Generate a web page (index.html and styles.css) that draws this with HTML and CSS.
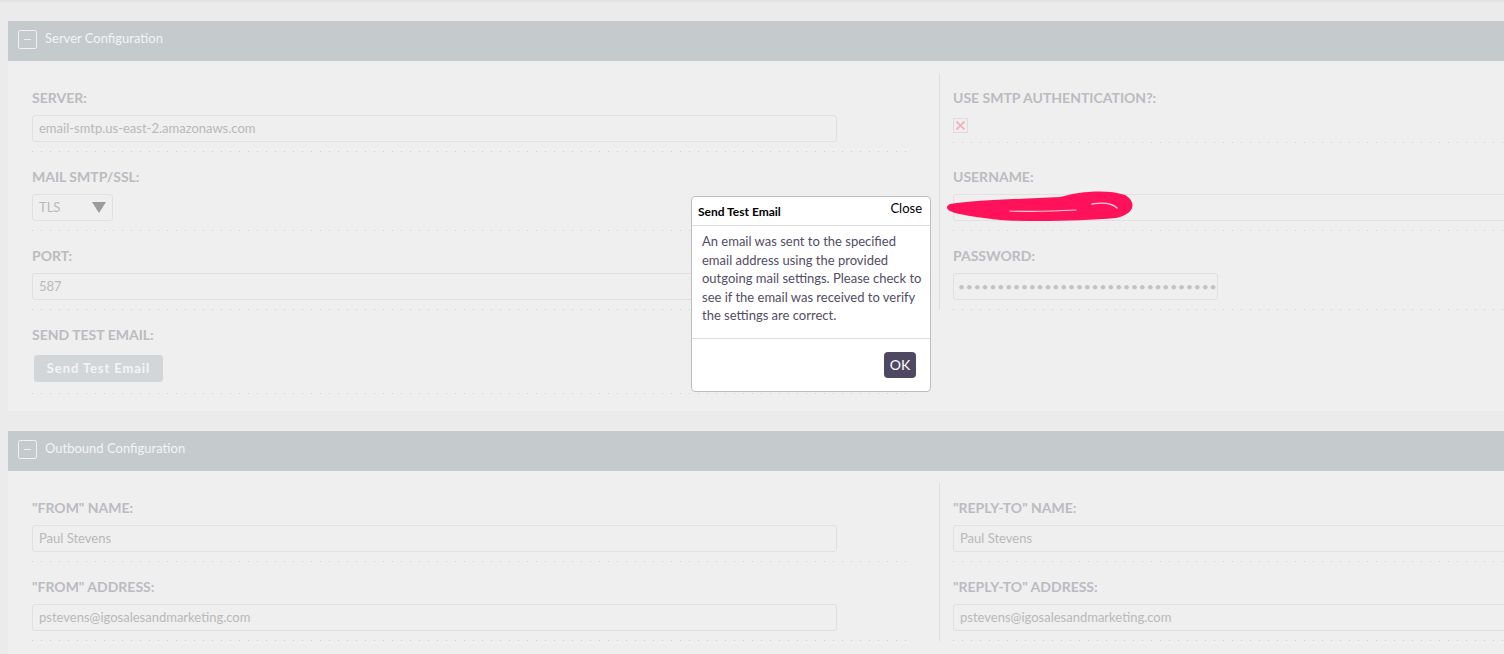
FILE: index.html
```html
<!DOCTYPE html>
<html lang="en">
<head>
<meta charset="utf-8">
<title>Email Settings</title>
<link rel="stylesheet" href="styles.css">
</head>
<body>
<div class="topline"></div>
<div class="page">
  <section class="panel">
    <div class="panel-header">
      <span class="toggle"><span class="minus"></span></span>
      <span class="panel-title">Server Configuration</span>
    </div>
    <div class="panel-body">
      <div class="cell left">
        <div class="label">SERVER:</div>
        <div class="field"><div class="input wide">email-smtp.us-east-2.amazonaws.com</div></div>
      </div>
      <div class="cell right">
        <div class="label">USE SMTP AUTHENTICATION?:</div>
        <div class="field check-field">
          <span class="checkbox"><svg viewBox="0 0 13 13" width="13" height="13"><path d="M2.5 2.5 L10.5 10.5 M10.5 2.5 L2.5 10.5" stroke="#f2b5be" stroke-width="1.8" fill="none"/></svg></span>
        </div>
      </div>
      <div class="cell left">
        <div class="label">MAIL SMTP/SSL:</div>
        <div class="field">
          <div class="input select"><span>TLS</span><svg class="caret" viewBox="0 0 14 11" width="14" height="11"><polygon points="0,0 14,0 7,11" fill="#9b9b9b"/></svg></div>
        </div>
      </div>
      <div class="cell right">
        <div class="label">USERNAME:</div>
        <div class="field"><div class="input wide">&nbsp;</div></div>
      </div>
      <div class="cell left">
        <div class="label">PORT:</div>
        <div class="field"><div class="input wide">587</div></div>
      </div>
      <div class="cell right">
        <div class="label">PASSWORD:</div>
        <div class="field"><div class="input password">•••••••••••••••••••••••••••••••••</div></div>
      </div>
      <div class="cell left last">
        <div class="label">SEND TEST EMAIL:</div>
        <div class="field btn-field"><span class="btn">Send Test Email</span></div>
      </div>
      <div class="cell empty"></div>
    </div>
  </section>

  <section class="panel">
    <div class="panel-header">
      <span class="toggle"><span class="minus"></span></span>
      <span class="panel-title">Outbound Configuration</span>
    </div>
    <div class="panel-body">
      <div class="cell left">
        <div class="label">"FROM" NAME:</div>
        <div class="field"><div class="input wide">Paul Stevens</div></div>
      </div>
      <div class="cell right">
        <div class="label">"REPLY-TO" NAME:</div>
        <div class="field"><div class="input wide">Paul Stevens</div></div>
      </div>
      <div class="cell left">
        <div class="label">"FROM" ADDRESS:</div>
        <div class="field"><div class="input wide">pstevens@igosalesandmarketing.com</div></div>
      </div>
      <div class="cell right">
        <div class="label">"REPLY-TO" ADDRESS:</div>
        <div class="field"><div class="input wide">pstevens@igosalesandmarketing.com</div></div>
      </div>
    </div>
  </section>
</div>

<svg class="scribble" viewBox="940 185 200 40" width="200" height="40">
  <path d="M950 204 C 975 200, 1020 199, 1060 197 C 1080 191, 1108 189, 1125 195 C 1137 202, 1135 214, 1116 218 C 1082 221, 1032 222, 1000 220 C 978 217, 958 215, 950 211 C 946 209, 946 206, 950 204 Z" fill="#ff1259"/>
  <path d="M1010 211 C 1032 212, 1058 211, 1076 210" fill="none" stroke="#f4d0da" stroke-width="1.2" stroke-linecap="round"/>
  <path d="M1092 204 C 1104 202, 1113 204, 1117 208" fill="none" stroke="#f4d0da" stroke-width="1.4" stroke-linecap="round"/>
</svg>

<div class="modal">
  <div class="modal-header">
    <span class="modal-title">Send Test Email</span>
    <span class="modal-close">Close</span>
  </div>
  <div class="modal-body">An email was sent to the specified email address using the provided outgoing mail settings. Please check to see if the email was received to verify the settings are correct.</div>
  <div class="modal-footer"><span class="ok">OK</span></div>
</div>
</body>
</html>
```

FILE: styles.css
```css
html, body {
  margin: 0;
  padding: 0;
}
body {
  background: #ebebeb;
  font-family: Lato, "Open Sans", sans-serif;
  width: 1504px;
  height: 654px;
  overflow: hidden;
  position: relative;
}
.topline {
  height: 2px;
  background: #e3e3e3;
}
.page {
  padding: 19px 0 0 8px;
}
.panel {
  width: 1862px;
  margin-bottom: 20px;
}
.panel-header {
  height: 40px;
  background: #c5cacd;
  display: flex;
  align-items: center;
  padding-left: 10px;
  padding-bottom: 6px;
  box-sizing: border-box;
}
.toggle {
  width: 17px;
  height: 17px;
  border: 1px solid #eef0f1;
  border-radius: 2px;
  display: flex;
  align-items: center;
  justify-content: center;
  margin-right: 8px;
  margin-top: 3px;
}
.minus {
  width: 7px;
  height: 1px;
  background: #eef0f1;
}
.panel-title {
  color: #f3f4f5;
  font-size: 13px;
}
.panel-body {
  background: #efefef;
  padding: 12px 0 17px;
  display: grid;
  grid-template-columns: 931px 931px;
  align-items: start;
}
.cell {
  padding-top: 17px;
}
.cell.left {
  padding: 17px 29px 0 24px;
}
.cell.right {
  border-left: 1px solid #dedede;
  padding: 17px 0 0 13px;
  align-self: stretch;
}
.cell.empty {
  padding: 0;
}
.label {
  font-size: 14px;
  font-weight: bold;
  line-height: 16px;
  color: #bcbbc1;
  margin-bottom: 9px;
}
.field {
  padding-bottom: 9px;
  background-image: linear-gradient(to right, #cfcfcf 1px, transparent 1px);
  background-size: 9px 1px;
  background-repeat: repeat-x;
  background-position: left bottom;
  height: 28px;
  box-sizing: content-box;
}
.input {
  box-sizing: border-box;
  height: 27px;
  border: 1px solid #e0e0e0;
  border-radius: 3px;
  background: #efefef;
  color: #b9b9b9;
  font-size: 13px;
  line-height: 25px;
  padding: 0 6px;
  white-space: nowrap;
  overflow: hidden;
}
.input.wide {
  width: 805px;
}
.input.select {
  width: 81px;
  display: flex;
  align-items: center;
  justify-content: space-between;
  padding-right: 6px;
}
.caret {
  display: block;
}
.input.password {
  width: 265px;
  color: #c2c2c2;
  font-size: 12px;
  letter-spacing: 0.9px;
  padding-left: 4px;
}
.check-field {
  height: 15px;
  padding-top: 3px;
  padding-bottom: 10px;
}
.checkbox {
  display: block;
  width: 15px;
  height: 15px;
  box-sizing: border-box;
  border: 1px solid #dcdcdc;
  background: #efefef;
}
.checkbox svg {
  display: block;
}
.btn-field {
  padding-top: 3px;
  padding-bottom: 12px;
  height: 27px;
}
.btn {
  display: inline-block;
  margin-left: 2px;
  width: 129px;
  height: 27px;
  line-height: 27px;
  text-align: center;
  background: #d3d6d9;
  color: #f3f4f5;
  font-weight: bold;
  font-size: 13px;
  letter-spacing: 0.9px;
  border-radius: 3px;
}
.scribble {
  position: absolute;
  left: 940px;
  top: 185px;
}
.modal {
  position: absolute;
  left: 691px;
  top: 196px;
  width: 240px;
  box-sizing: border-box;
  background: #fff;
  border: 1px solid #bdbdbd;
  border-radius: 4px;
}
.modal-header {
  height: 28px;
  border-bottom: 1px solid #dcdcdc;
  display: flex;
  justify-content: space-between;
  padding: 0 8px 0 6px;
}
.modal-title {
  font-size: 12px;
  font-weight: bold;
  color: #000;
  margin-top: 7px;
}
.modal-close {
  font-size: 13px;
  color: #000;
  margin-top: 3px;
}
.modal-body {
  padding: 6px 8px 13px 10px;
  font-size: 13px;
  line-height: 18.5px;
  color: #534d64;
  border-bottom: 1px solid #dcdcdc;
}
.modal-footer {
  display: flex;
  justify-content: flex-end;
  padding: 13px 14px 13px;
}
.ok {
  width: 32px;
  height: 26px;
  line-height: 26px;
  text-align: center;
  background: #4f4862;
  color: #fff;
  font-size: 14px;
  border-radius: 4px;
}
```
